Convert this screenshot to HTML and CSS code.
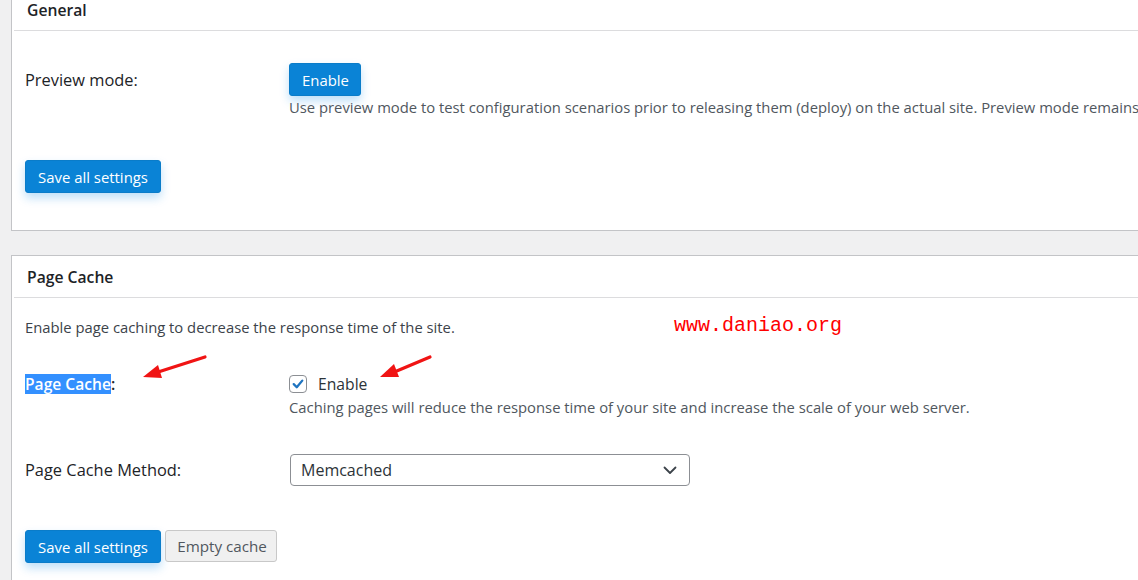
FILE: index.html
```html
<!DOCTYPE html>
<html>
<head>
<meta charset="utf-8">
<link rel="stylesheet" href="styles.css">
</head>
<body>
<div class="wrap">
  <section class="panel panel-general">
    <h3 class="panel-head">General</h3>
    <div class="panel-body body-general">
      <div class="row">
        <div class="label label-btn">Preview mode:</div>
        <div class="field">
          <button class="btn btn-primary btn-enable">Enable</button>
          <p class="desc desc-after-btn">Use preview mode to test configuration scenarios prior to releasing them (deploy) on the actual site. Preview mode remains</p>
        </div>
      </div>
      <div class="actions actions-general">
        <button class="btn btn-primary btn-save">Save all settings</button>
      </div>
    </div>
  </section>

  <section class="panel panel-cache">
    <h3 class="panel-head">Page Cache</h3>
    <div class="panel-body body-cache">
      <p class="intro">Enable page caching to decrease the response time of the site.</p>
      <div class="row row-check">
        <div class="label"><span class="selected">Page Cache</span>:</div>
        <div class="field">
          <label class="check">
            <span class="box"><svg width="18" height="18" viewBox="0 0 18 18"><path d="M4.2 9.2 L7.6 12.6 L13.8 5.2" fill="none" stroke="#1f74c0" stroke-width="2.6" stroke-linecap="round" stroke-linejoin="round"/></svg></span>
            <span class="check-text">Enable</span>
          </label>
          <p class="desc desc-after-check">Caching pages will reduce the response time of your site and increase the scale of your web server.</p>
        </div>
      </div>
      <div class="row row-select">
        <div class="label label-select">Page Cache Method:</div>
        <div class="field">
          <div class="select">
            <span>Memcached</span>
            <svg class="chev" width="14" height="9" viewBox="0 0 14 9"><path d="M1.5 1.5 L7 7 L12.5 1.5" fill="none" stroke="#3c434a" stroke-width="1.8" stroke-linecap="round" stroke-linejoin="round"/></svg>
          </div>
        </div>
      </div>
      <div class="actions actions-cache">
        <button class="btn btn-primary btn-save">Save all settings</button>
        <button class="btn btn-secondary">Empty cache</button>
      </div>
    </div>
    <div class="watermark">www.daniao.org</div>
    <svg class="arrow arrow-one" width="70" height="26" viewBox="0 0 70 26"><path d="M64 3 L14 19" stroke="#f01414" stroke-width="3.2" stroke-linecap="round"/><path d="M2 23 L17 11 L21 24 Z" fill="#f01414"/></svg>
    <svg class="arrow arrow-two" width="58" height="26" viewBox="0 0 58 26"><path d="M52 3 L14 19" stroke="#f01414" stroke-width="3.2" stroke-linecap="round"/><path d="M2 23 L16 10 L21 23 Z" fill="#f01414"/></svg>
  </section>
</div>
</body>
</html>
```

FILE: styles.css
```css
html, body {
  margin: 0;
  padding: 0;
  background: #f0f0f1;
  overflow: hidden;
}
body {
  font-family: "Open Sans", "Noto Sans", sans-serif;
  font-size: 14.8px;
  color: #3c434a;
  width: 1138px;
  height: 580px;
}
.wrap {
  padding-left: 11px;
  width: 1127px;
  overflow: hidden;
}
.panel {
  position: relative;
  background: #fff;
  border: 1px solid #c3c4c7;
  border-right: none;
}
.panel-general {
  margin-top: -12px;
}
.panel-cache {
  margin-top: 24px;
}
.panel-head {
  margin: 0 0 0 2px;
  height: 41px;
  line-height: 42px;
  padding-left: 13px;
  font-size: 15.7px;
  font-weight: 600;
  color: #1d2327;
  border-bottom: 1px solid #dcdcde;
}
.panel-body {
  padding-left: 13px;
}
.body-general {
  padding-top: 32px;
  padding-bottom: 37px;
}
.body-cache {
  padding-top: 19px;
  padding-bottom: 20px;
}
.row {
  display: grid;
  grid-template-columns: 264px 1fr;
}
.label {
  font-size: 16.4px;
  font-weight: 400;
  color: #1d2327;
  line-height: 20px;
}
.label-btn {
  line-height: 33px;
}
.desc, .intro {
  margin: 0;
  line-height: 20px;
  font-size: 14.8px;
  color: #50575e;
  white-space: nowrap;
}
.intro {
  color: #3c434a;
}
.desc-after-btn {
  margin-top: 1px;
}
.btn {
  font-family: inherit;
  font-size: 14.9px;
  border-radius: 3px;
  cursor: pointer;
  padding: 0 12px;
  height: 33px;
}
.btn-primary {
  background: #0a83d6;
  color: #fff;
  border: 1px solid #0a7cc9;
  box-shadow: 0 5px 10px rgba(20, 140, 230, 0.28);
}
.btn-enable {
  padding: 0 12px;
  width: 72px;
}
.btn-save {
  width: 136px;
  padding: 0;
}
.btn-secondary {
  background: #f0f0f0;
  color: #50575e;
  border: 1px solid #c8c8c8;
  width: 112px;
  height: 32px;
  padding: 0 0 0 2px;
  font-size: 15.2px;
}
.actions {
  display: flex;
  gap: 4px;
}
.actions-general {
  margin-top: 43px;
}
.row-check {
  margin-top: 37px;
}
.selected {
  background: #3390ff;
  color: #fff;
  font-weight: 600;
  display: inline-block;
  line-height: 20px;
}
.row-check .label {
  font-weight: 600;
  font-size: 15.6px;
}
.check {
  display: flex;
  align-items: center;
  height: 20px;
  gap: 11px;
}
.box {
  width: 16px;
  height: 16px;
  border: 1px solid #8c8f94;
  border-radius: 4px;
  display: flex;
  align-items: center;
  justify-content: center;
  margin-top: -1px;
}
.box svg {
  width: 16px;
  height: 16px;
}
.check-text {
  font-size: 15.7px;
  color: #2c3338;
}
.desc-after-check {
  margin-top: 3px;
}
.row-select {
  margin-top: 37px;
}
.label-select {
  line-height: 32px;
}
.select {
  height: 30px;
  border: 1px solid #8c8f94;
  border-radius: 4px;
  display: flex;
  align-items: center;
  justify-content: space-between;
  padding: 0 12px 0 10px;
  box-sizing: content-box;
  width: 376px;
  margin-left: 1px;
  font-size: 16px;
  color: #2c3338;
}
.actions-cache {
  margin-top: 44px;
}
.watermark {
  position: absolute;
  left: 662px;
  top: 58px;
  font-family: "Liberation Mono", "DejaVu Sans Mono", monospace;
  font-size: 20px;
  color: #f00;
  line-height: 24px;
}
.arrow {
  position: absolute;
}
.arrow-one {
  left: 129px;
  top: 98px;
}
.arrow-two {
  left: 366px;
  top: 98px;
}
```
